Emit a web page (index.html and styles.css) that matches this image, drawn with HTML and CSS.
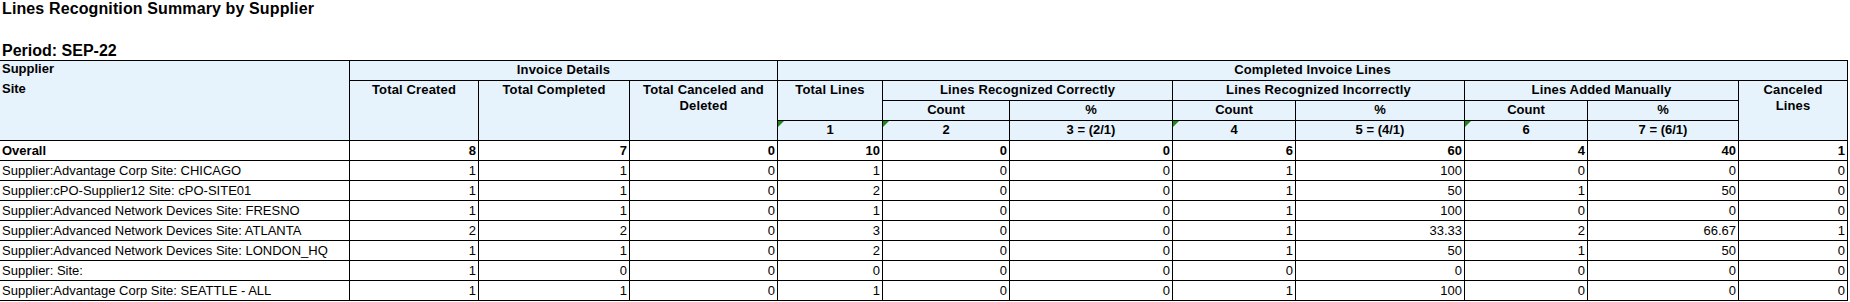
FILE: index.html
```html
<!DOCTYPE html>
<html lang="en">
<head>
<meta charset="utf-8">
<title>Lines Recognition Summary by Supplier</title>
<link rel="stylesheet" href="styles.css">
</head>
<body>
<h1 class="title">Lines Recognition Summary by Supplier</h1>
<h2 class="period">Period: SEP-22</h2>
<div class="report">
  <div class="h c-left r4 sup"><div class="sup-line">Supplier</div><div class="sup-line">Site</div></div>
  <div class="h s3">Invoice Details</div>
  <div class="h s8">Completed Invoice Lines</div>

  <div class="h r3">Total Created</div>
  <div class="h r3">Total Completed</div>
  <div class="h r3">Total Canceled and Deleted</div>
  <div class="h r2">Total Lines</div>
  <div class="h s2">Lines Recognized Correctly</div>
  <div class="h s2">Lines Recognized Incorrectly</div>
  <div class="h s2">Lines Added Manually</div>
  <div class="h r3">Canceled<br>Lines</div>

  <div class="h n">Count</div>
  <div class="h n">%</div>
  <div class="h n">Count</div>
  <div class="h n">%</div>
  <div class="h n">Count</div>
  <div class="h n">%</div>

  <div class="h n flag">1</div>
  <div class="h n flag">2</div>
  <div class="h n">3 = (2/1)</div>
  <div class="h n flag">4</div>
  <div class="h n">5 = (4/1)</div>
  <div class="h n flag">6</div>
  <div class="h n">7 = (6/1)</div>

  <div class="d l b">Overall</div>
  <div class="d b">8</div><div class="d b">7</div><div class="d b">0</div><div class="d b">10</div><div class="d b">0</div><div class="d b">0</div><div class="d b">6</div><div class="d b">60</div><div class="d b">4</div><div class="d b">40</div><div class="d b">1</div>

  <div class="d l">Supplier:Advantage Corp Site: CHICAGO</div>
  <div class="d">1</div><div class="d">1</div><div class="d">0</div><div class="d">1</div><div class="d">0</div><div class="d">0</div><div class="d">1</div><div class="d">100</div><div class="d">0</div><div class="d">0</div><div class="d">0</div>

  <div class="d l">Supplier:cPO-Supplier12 Site: cPO-SITE01</div>
  <div class="d">1</div><div class="d">1</div><div class="d">0</div><div class="d">2</div><div class="d">0</div><div class="d">0</div><div class="d">1</div><div class="d">50</div><div class="d">1</div><div class="d">50</div><div class="d">0</div>

  <div class="d l">Supplier:Advanced Network Devices Site: FRESNO</div>
  <div class="d">1</div><div class="d">1</div><div class="d">0</div><div class="d">1</div><div class="d">0</div><div class="d">0</div><div class="d">1</div><div class="d">100</div><div class="d">0</div><div class="d">0</div><div class="d">0</div>

  <div class="d l">Supplier:Advanced Network Devices Site: ATLANTA</div>
  <div class="d">2</div><div class="d">2</div><div class="d">0</div><div class="d">3</div><div class="d">0</div><div class="d">0</div><div class="d">1</div><div class="d">33.33</div><div class="d">2</div><div class="d">66.67</div><div class="d">1</div>

  <div class="d l">Supplier:Advanced Network Devices Site: LONDON_HQ</div>
  <div class="d">1</div><div class="d">1</div><div class="d">0</div><div class="d">2</div><div class="d">0</div><div class="d">0</div><div class="d">1</div><div class="d">50</div><div class="d">1</div><div class="d">50</div><div class="d">0</div>

  <div class="d l">Supplier: Site:</div>
  <div class="d">1</div><div class="d">0</div><div class="d">0</div><div class="d">0</div><div class="d">0</div><div class="d">0</div><div class="d">0</div><div class="d">0</div><div class="d">0</div><div class="d">0</div><div class="d">0</div>

  <div class="d l">Supplier:Advantage Corp Site: SEATTLE - ALL</div>
  <div class="d">1</div><div class="d">1</div><div class="d">0</div><div class="d">1</div><div class="d">0</div><div class="d">0</div><div class="d">1</div><div class="d">100</div><div class="d">0</div><div class="d">0</div><div class="d">0</div>
</div>
</body>
</html>
```
FILE: styles.css
```css
* { box-sizing: border-box; }

body {
  margin: 0;
  background: #fff;
  color: #000;
  font-family: "Liberation Sans", Arial, sans-serif;
}

.title {
  margin: 0 0 23px 2px;
  font-size: 16px;
  line-height: 18px;
  font-weight: bold;
  letter-spacing: 0.12px;
}

.period {
  margin: 0 0 0 2px;
  font-size: 16px;
  line-height: 19px;
  font-weight: bold;
}

.report {
  display: grid;
  grid-template-columns: 349px 128px 150px 147px 104px 126px 162px 122px 168px 122px 150px 108px;
  grid-auto-rows: 19px;
  gap: 1px;
  width: 1848px;
  padding: 1px 1px 1px 0;
  background: #000;
  font-size: 13px;
  line-height: 16px;
}

.h {
  background: #e6f2fc;
  font-weight: bold;
  text-align: center;
  padding-top: 1px;
  position: relative;
  letter-spacing: 0.15px;
}

.c-left { text-align: left; padding: 0 2px; letter-spacing: 0; }
.sup-line { height: 20px; }

.s2 { grid-column: span 2; }
.s3 { grid-column: span 3; }
.s8 { grid-column: span 8; }
.r2 { grid-row: span 2; }
.r3 { grid-row: span 3; }
.r4 { grid-row: span 4; }

.n {
  font-family: "Liberation Sans Narrow", "Arial Narrow", "Liberation Sans", sans-serif;
  letter-spacing: 0;
}

.flag::before {
  content: "";
  position: absolute;
  left: 0;
  top: 0;
  width: 0;
  height: 0;
  border-top: 6px solid #1e8a1e;
  border-right: 6px solid transparent;
}

.d {
  background: #fff;
  text-align: right;
  padding: 2px 2px 0 2px;
  white-space: nowrap;
  overflow: hidden;
}

.d.l { text-align: left; }
.d.b { font-weight: bold; }
```
